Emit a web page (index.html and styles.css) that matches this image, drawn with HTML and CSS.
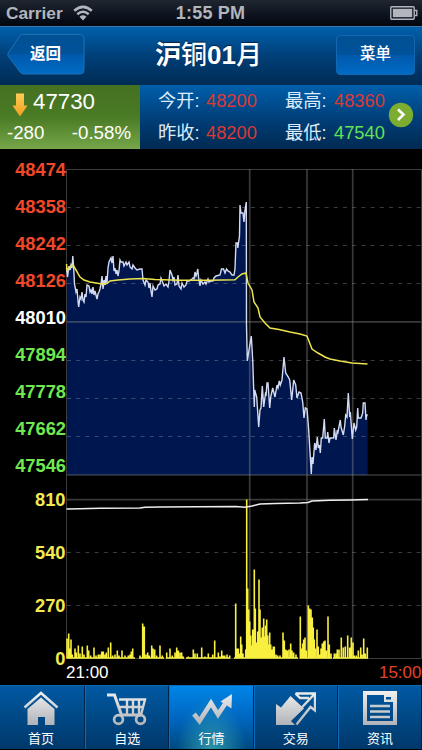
FILE: index.html
```html
<!DOCTYPE html>
<html lang="zh-CN">
<head>
    <meta charset="UTF-8">
    <title>沪铜01月</title>
    <link rel="stylesheet" href="styles.css">
</head>
<body>
<div class="app">
    <div class="status">
        <div class="carrier">Carrier
            <svg class="wifi" width="20" height="16" viewBox="0 0 20 16">
                <path d="M1.2 5.8Q10-2 18.8 5.8M4.3 9.2Q10 4.2 15.7 9.2"/>
                <path class="dot" d="M6.5 11.7Q10 9 13.5 11.7L10 15.5z"/>
            </svg>
        </div>
        <div class="time">1:55 PM</div>
        <svg class="battery" width="28" height="14" viewBox="0 0 28 14">
            <rect class="shell" x=".8" y=".8" width="23.4" height="12.4" rx="1"/>
            <rect x="2.8" y="2.8" width="19.4" height="8.4"/>
            <path class="shell" d="M24.5 4.5h2.3v5h-2.3"/>
        </svg>
    </div>
    <div class="header">
        <div class="back">
            <svg width="78" height="41" viewBox="0 0 78 41">
                <defs>
                    <linearGradient id="btn" x1="0" y1="0" x2="0" y2="1">
                        <stop offset="0" stop-color="#005092"/>
                        <stop offset=".49" stop-color="#00529a"/>
                        <stop offset=".51" stop-color="#0059ac"/>
                        <stop offset="1" stop-color="#006bc4"/>
                    </linearGradient>
                </defs>
                <path d="M15.5.5H73q4 0 4 4V36q0 4-4 4H16.5q-2 0-3.500-2L1.200 22q-1-1.500 0-3L12.500 2.500Q14 .5 15.500.5z" fill="url(#btn)" stroke="#1c72b7"/>
            </svg>
            <span>返回</span>
        </div>
        <h1 class="title"><b lang="ja">沪</b>铜<b class="num">01</b>月</h1>
        <div class="menu">菜单</div>
    </div>
    <div class="info">
        <div class="price">
            <div class="now">
                <svg width="16" height="24" viewBox="0 0 16 24">
                    <defs>
                        <linearGradient id="gold" x1="0" y1="0" x2="0" y2="1">
                            <stop offset="0" stop-color="#ffcb57"/>
                            <stop offset="1" stop-color="#efa01f"/>
                        </linearGradient>
                    </defs>
                    <path d="M4 .5h8v12h3.500L8 23.500.500 12.500H4z" fill="url(#gold)"/>
                </svg>
                <span>47730</span>
            </div>
            <div class="change"><span>-280</span><span>-0.58%</span></div>
        </div>
        <div class="quotes">
            <span>今开:</span><span class="up">48200</span><span>最高:</span><span class="up">48360</span>
            <span>昨收:</span><span class="up">48200</span><span>最低:</span><span class="down">47540</span>
        </div>
        <svg class="more" width="26" height="26" viewBox="0 0 26 26">
            <circle cx="13" cy="13" r="12.200"/>
            <path d="M10 7.500l5.500 5-5.500 5.500"/>
        </svg>
    </div>
    <svg class="chart" width="422" height="536" viewBox="0 149 422 536">
        <!-- 价格区域 -->
        <polygon class="area" id="area"/>
        <g class="dash">
            <path d="M67 207.500H421M67 245.500H421M67 283.500H421M67 360.500H421M67 398.500H421M67 436.500H421"/>
            <path d="M67 552.500H421M67 605.500H421"/>
        </g>
        <path class="frame" d="M66.500 169.500H421.500V658.500H66.500z"/>
        <path class="solid" d="M67 321.800H421M67 475H421M67 499.700H421"/>
        <path class="solid" d="M249.700 169V658M307 169V658M352.700 169V658"/>
        <polyline class="line" id="line" points="66.5,268 67.5,277 69,266 70,270 71,265 72,268 72.8,256 73.5,265 74.5,284 76,292 77,289 78,301 78.7,307 80,297 81,299 82,292 83,300 84,302 85,294 86,297 87,285 89,286 90,292 91,290 92,294 93,287 94,295 95,291 97,299 98,294 99,292 100,289 101,284 102,276 103,289 104,280 105,285 106,276 107,283 108,268 109,262 111,258 112,263 113,256 114,271 115,268 116,274 117,270 118,276 119,271 120,260 121,262 123,262 124,266 126,262 127,265 129,262 130,267 132,269 133,265 135,268 137,270 140,269 142,269 143,280 145,285 146,280 148,282 149,288 150,283 151,291 152,297 153,286 155,290 157,289 158,285 160,284 161,278 163,283 164,286 166,284 168,287 169,281 170,270 172,275 173,280 174,277 175,285 177,284 178,275 179,286 181,289 182,283 184,287 186,285 187,281 189,281 191,280 193,278 194,279 195,272 196,276 197,273 197.8,269 198.5,277 200,286 201,280 203,284 205,282 206,284 208,279 209,282 211,281 213,281 214,278 216,276 220,275 221.5,269 223.5,269 225,273 226.500,269 228,271 230,272 232,275 234,275 235,269 236,243 237.500,243 237.800,248 239.500,236 240,205 241,213 243,213 244,222 245,210 246.300,202 246.500,325 247.300,361 248.700,352 251.300,336 252.700,360 254.300,407 254.700,390 256.700,397 258.700,427 260,410 261,408 262.300,386 263.700,407 265.700,392 266,396 267,383 268,383 269.700,408 270.700,397 272.700,388 275,397 277,385 278,388 279.300,381 280.300,385 282,380 284,357 285.700,373 288.300,377 289.700,380 291.700,400 293.700,380 295.700,385 297,398 299,392 301,393 302.700,402 304,418 305.300,408 307,409 308.700,430 311.300,474 312,457 313,464 314.700,443 316,450 317.300,437 318.300,448 319.500,445 320.300,453 321.300,438 322.700,438 324.300,419 325.300,438 327.300,438 327.700,432 329,443 330,438 333.700,438 334.300,428 336,440 337.300,430 338,432 340.300,420 341,427 343.300,435 344.700,426 345.700,415 347,417 348.300,393 349.700,417 350.300,412 352.300,439 354,423 355.700,430 356.700,427 357.700,408 358.300,418 361,418 362.700,413 363.300,403 365,403 366,420 366.700,415 367.700,415"/>
        <polyline class="avg" points="66.500,264 67,270 70,267 73,265 76,270 80,277 84,280 90,282 96,283 102,284 107,283.500 110,281 118,280 130,279 143,278.500 155,279.500 180,280.200 210,280.200 235,279.700 238,277 242,274 246,273 248,283 252,290 254,302 258,308 260,317 265,323 270,328 279,329.500 290,332 300,334 307,336 312,349 318,353 325,357 330,359 340,361 352,363 367.500,364"/>
        <!-- 成交量 -->
        <path class="bars" id="bars"/>
        <polyline class="hold" points="66.500,509 80,508.800 100,508.300 140,508 145,507.200 160,507 236,506.600 245,507.200 252,506 260,504 275,503.500 300,503 308,502.500 312,501 330,500.300 350,500 368,499.500"/>
        <g class="axis">
            <g class="red">
                <text x="66" y="175.500">48474</text>
                <text x="66" y="212.500">48358</text>
                <text x="66" y="249.500">48242</text>
                <text x="66" y="286.500">48126</text>
            </g>
            <text x="66" y="323.500">48010</text>
            <g class="green">
                <text x="66" y="360.500">47894</text>
                <text x="66" y="397.500">47778</text>
                <text x="66" y="434.500">47662</text>
                <text x="66" y="471.500">47546</text>
            </g>
            <g class="yellow">
                <text x="65.500" y="505.500">810</text>
                <text x="65.500" y="558.500">540</text>
                <text x="65.500" y="611.500">270</text>
                <text x="65.500" y="664.500">0</text>
            </g>
        </g>
        <text class="hour" x="66" y="678">21:00</text>
        <text class="hour close" x="421.500" y="678">15:00</text>
    </svg>
    <div class="tabs">
        <div class="tab">
            <svg width="36" height="36" viewBox="0 0 36 36">
                <defs>
                    <linearGradient id="silver" gradientUnits="userSpaceOnUse" x1="0" y1="0" x2="0" y2="36">
                        <stop offset="0" stop-color="#f2f2f2"/>
                        <stop offset="1" stop-color="#aeb1b6"/>
                    </linearGradient>
                </defs>
                <path d="M1.500 17.500L18 3l16.500 14.500" fill="none" stroke="url(#silver)" stroke-width="2.600"/>
                <path d="M18 7.500L31.500 19v16H22v-8h-7v8H4.500V19z" fill="url(#silver)"/>
            </svg>
            <span>首页</span>
        </div>
        <div class="tab">
            <svg width="40" height="36" viewBox="0 0 40 36">
                <g fill="none" stroke="url(#silver)">
                    <path d="M0 5h7.500l7 20h19" stroke-width="3"/>
                    <path d="M12 9.500h26L34 25M13 17h23M20 9v15.500M26 9v15.500M32 9v15.500" stroke-width="2.400"/>
                    <circle cx="11.500" cy="29.500" r="4.400" stroke-width="2.700"/>
                    <circle cx="33.500" cy="29.500" r="4.400" stroke-width="2.700"/>
                </g>
            </svg>
            <span>自选</span>
        </div>
        <div class="tab active">
            <svg width="42" height="36" viewBox="0 0 42 36">
                <path d="M3 24l5.500 7L20 13l7 11.500L36 11" fill="none" stroke="url(#silver)" stroke-width="4.600"/>
                <path d="M41 4l-.5 14.500-11-7z" fill="url(#silver)"/>
            </svg>
            <span>行情</span>
        </div>
        <div class="tab">
            <svg width="40" height="36" viewBox="0 0 40 36">
                <path d="M0 14l5 3.500L14.500 6 28 18.500 15 31l4 4H0z" fill="url(#silver)"/>
                <path d="M19.500 3.500H39V20.500l-4.500-3.500-14 17.500M38 4.500L22.500 21v0M19.500 3.500l4.500 4.500h9" fill="none" stroke="url(#silver)" stroke-width="2.400"/>
            </svg>
            <span>交易</span>
        </div>
        <div class="tab">
            <svg width="36" height="36" viewBox="0 0 36 36">
                <path d="M1 1h34v34H1zM5 5v26h26V12h-9V5zM24 7v2.500h5V7z" fill="url(#silver)" fill-rule="evenodd"/>
                <path d="M8 16h20M8 21.500h20M8 27h20" fill="none" stroke="#c8cace" stroke-width="2.600"/>
            </svg>
            <span>资讯</span>
        </div>
    </div>
</div>
<script>
    //面积图沿着价格线一直画到底部
    let line=document.querySelector("#line");
    document.querySelector("#area").setAttribute("points","66.5,475 "+line.getAttribute("points")+" 367.7,475");
    //成交量 [x,高度]
    let vols=[
        [67,20],[68.7,25],[70,10],[71,19],[72.3,4],[75,10],[76.3,6],[78.3,13],[80,5],[82.3,12],[84,4],[87.3,13],[88.7,8],[90.7,3],
        [94,11],[96,3],[98.3,4],[100,4],[101.7,7],[103.3,7],[105,4],[106.3,6],[108.3,11],[110.7,16],[112.7,3],[115,4],[117.3,8],[119,3],
        [122,8],[125,3],[128.3,3],[130,4],[131.3,7],[132.7,10],[140,3],[142.7,35],[144.3,32],[146,4],[147.7,6],[149.3,3],[151.7,13],
        [153,10],[154.7,9],[156.7,3],[160,13],[162.3,3],[166.7,6],[170,10],[172.3,3],[175,6],[176.7,11],[178.3,8],[180,6],[181.7,6],
        [183.3,2],[188.3,2],[193.3,9],[195,5],[197.3,5],[201.7,11],[205,2],[208.3,5],[212.7,4],[214.7,18],[218.3,6],[220,2],[221.7,8],
        [223.3,3],[224.7,3],[227,4],[229.7,3],[235.7,55],[237,10],[238.3,10],[239.3,5],[240.7,22],[241.7,14],[243,5],[245.7,9],[246.7,159],
        [247.7,70],[248.7,49],[249.7,37],[250.7,23],[251.7,13],[252.7,29],[254.3,89],[255.3,50],[256.7,16],[257.7,27],[259,79],[260,49],
        [261.3,21],[262.3,31],[263.7,40],[264.7,22],[265.7,33],[266.7,39],[267.7,23],[268.7,14],[269.7,26],[270.7,14],[272,9],[273.3,12],
        [274.3,12],[276,4],[277.7,3],[280,3],[283,26],[284.3,18],[285.7,9],[287.3,8],[289,9],[290.7,15],[292,8],[293.7,6],[296,4],
        [300.3,42],[301.7,10],[302.7,15],[303.7,19],[305,21],[306.3,8],[308.3,53],[309.7,50],[311,49],[312.3,41],[313.3,31],[314.3,19],
        [315.3,10],[317,29],[318.3,12],[319.7,4],[321,10],[322.3,15],[323.7,17],[325,18],[326.3,8],[328,42],[329.3,14],[331,5],[334.3,5],
        [336,5],[337.3,9],[339,9],[341.3,21],[343.3,11],[345.3,12],[347.7,23],[349.7,11],[351.3,21],[353,16],[354.3,3],[356.3,3],
        [358.3,8],[360.7,11],[362,4],[363.7,20],[365.3,5],[367.3,11]
    ];
    let d="";
    vols.forEach(function (v) {
        d+="M"+v[0]+" 658.500v-"+v[1];
    });
    //底部一条细线
    d+="M67 658H135M139 658H164M166 658H184M186 658H230M234 658H298M300 658H332M333 658H368";
    document.querySelector("#bars").setAttribute("d",d);
</script>
</body>
</html>
```

FILE: styles.css
```css
body,html{
    margin: 0;
    padding: 0;
    background-color: #000;
}
.app{
    width: 422px;
    height: 750px;
    overflow: hidden;
    display: flex;
    flex-direction: column;
    font-family: "Liberation Sans","Noto Sans CJK SC",sans-serif;
    color: #fff;
}
.status{
    height: 26px;
    flex: none;
    display: grid;
    grid-template-columns: 1fr auto 1fr;
    align-items: center;
    padding: 0 4px 0 6px;
    box-sizing: border-box;
    background: linear-gradient(#20262f,#0a111c 65%,#02070e);
    color: #b2b5bc;
    font-size: 18px;
    font-weight: bold;
}
.carrier{
    display: flex;
    align-items: center;
    gap: 10px;
    font-size: 17.3px;
}
.time{
    margin-right: 3px;
    letter-spacing: .2px;
}
.wifi{
    fill: none;
    stroke: #b2b5bc;
    stroke-width: 2.5;
}
.wifi .dot{
    fill: #b2b5bc;
    stroke: none;
}
.battery{
    justify-self: end;
    fill: #b2b5bc;
}
.battery .shell{
    fill: none;
    stroke: #b2b5bc;
    stroke-width: 1.4;
}
.header{
    height: 59px;
    flex: none;
    box-sizing: border-box;
    border-top: 1px solid #3f78a5;
    display: grid;
    grid-template-columns: 1fr auto 1fr;
    align-items: center;
    padding: 0 7px 3px;
    background: linear-gradient(#0060ad,#003f78 50%,#002c55);
}
.back{
    display: grid;
    width: 78px;
    height: 41px;
    font-size: 15.5px;
    font-weight: bold;
}
.back svg,.back span{
    grid-area: 1/1;
}
.back span{
    align-self: center;
    padding: 0 0 2px 23px;
    line-height: 20px;
}
.title{
    margin: 0 5px 2px 0;
    font-size: 26px;
    line-height: 36px;
    font-weight: 500;
    white-space: nowrap;
    text-shadow: 0 -1px 1px #002347;
}
.title b{
    font-family: "Noto Sans CJK JP",sans-serif;
}
.title .num{
    font-family: "Liberation Sans",sans-serif;
}
.menu{
    justify-self: end;
    width: 79px;
    height: 40px;
    box-sizing: border-box;
    border: 1px solid #1268b0;
    border-radius: 4px;
    background: linear-gradient(#005092,#00529a 49%,#0059ac 51%,#006bc4);
    font-size: 15.5px;
    line-height: 36px;
    font-weight: 500;
    text-align: center;
}
.info{
    height: 64px;
    flex: none;
    display: flex;
    background: linear-gradient(#005fab,#003b72 60%,#002a52);
}
.price{
    width: 140px;
    height: 64px;
    background: linear-gradient(#457022,#4a7b25 50%,#76a649);
}
.now{
    display: flex;
    align-items: center;
    height: 32px;
    padding-left: 12px;
    gap: 5px;
    font-size: 22.3px;
}
.now svg{
    margin-top: 8px;
}
.now span{
    padding-top: 2px;
}
.change{
    display: flex;
    justify-content: space-between;
    padding: 0 9px 0 7px;
    font-size: 18.7px;
    line-height: 31px;
}
.quotes{
    display: grid;
    grid-template-columns: 48px 79px 49px 56px;
    grid-template-rows: 32px 32px;
    padding-left: 18px;
    font-size: 18.3px;
    line-height: 32px;
    color: #dcebfa;
    white-space: nowrap;
}
.quotes .up{
    color: #d93a36;
}
.quotes .down{
    color: #62e15a;
}
.more{
    align-self: center;
    flex: none;
    margin: 0 0 4px -2px;
    fill: #7cad31;
}
.more path{
    fill: none;
    stroke: #fff;
    stroke-width: 2.6;
}
.chart{
    flex: none;
    display: block;
}
.area{
    fill: #00164e;
}
.dash{
    fill: none;
    stroke: #8c93a5;
    stroke-opacity: .4;
    stroke-dasharray: 4 5.2;
}
.frame{
    fill: none;
    stroke: #3c3c3c;
}
.solid{
    fill: none;
    stroke: #888;
    stroke-opacity: .42;
    stroke-width: 1.7;
}
.line{
    fill: none;
    stroke: #d3daf3;
    stroke-width: 1.4;
}
.avg{
    fill: none;
    stroke: #ece44f;
    stroke-width: 1.5;
}
.hold{
    fill: none;
    stroke: #eee;
    stroke-width: 1.5;
}
.bars{
    fill: none;
    stroke: #f8ef3f;
    stroke-width: 1.6;
}
.axis{
    fill: #fff;
    font-size: 18.3px;
    font-weight: bold;
    text-anchor: end;
}
.red{
    fill: #f04829;
}
.green{
    fill: #72e850;
}
.yellow{
    fill: #f4ea50;
}
.hour{
    fill: #fff;
    font-size: 17px;
}
.close{
    fill: #e04427;
    text-anchor: end;
}
.tabs{
    height: 64px;
    flex: none;
    display: flex;
}
.tab{
    flex: 1;
    box-sizing: border-box;
    display: flex;
    flex-direction: column;
    align-items: center;
    padding-top: 4px;
    border-top: 1px solid #086cb9;
    border-left: 1px solid #086cb9;
    border-right: 1px solid #00264d;
    background: linear-gradient(#0059a2,#00386a);
    font-size: 13px;
    line-height: 26px;
}
.tab:first-child{
    border-left: 0;
    padding-right: 2px;
}
.tab svg{
    flex: none;
}
.tab.active{
    background: radial-gradient(ellipse at 50% 110%,#2e9aac,rgba(0,100,170,0) 60%),linear-gradient(#0085e8,#0064bc 55%,#004a80);
}
```
